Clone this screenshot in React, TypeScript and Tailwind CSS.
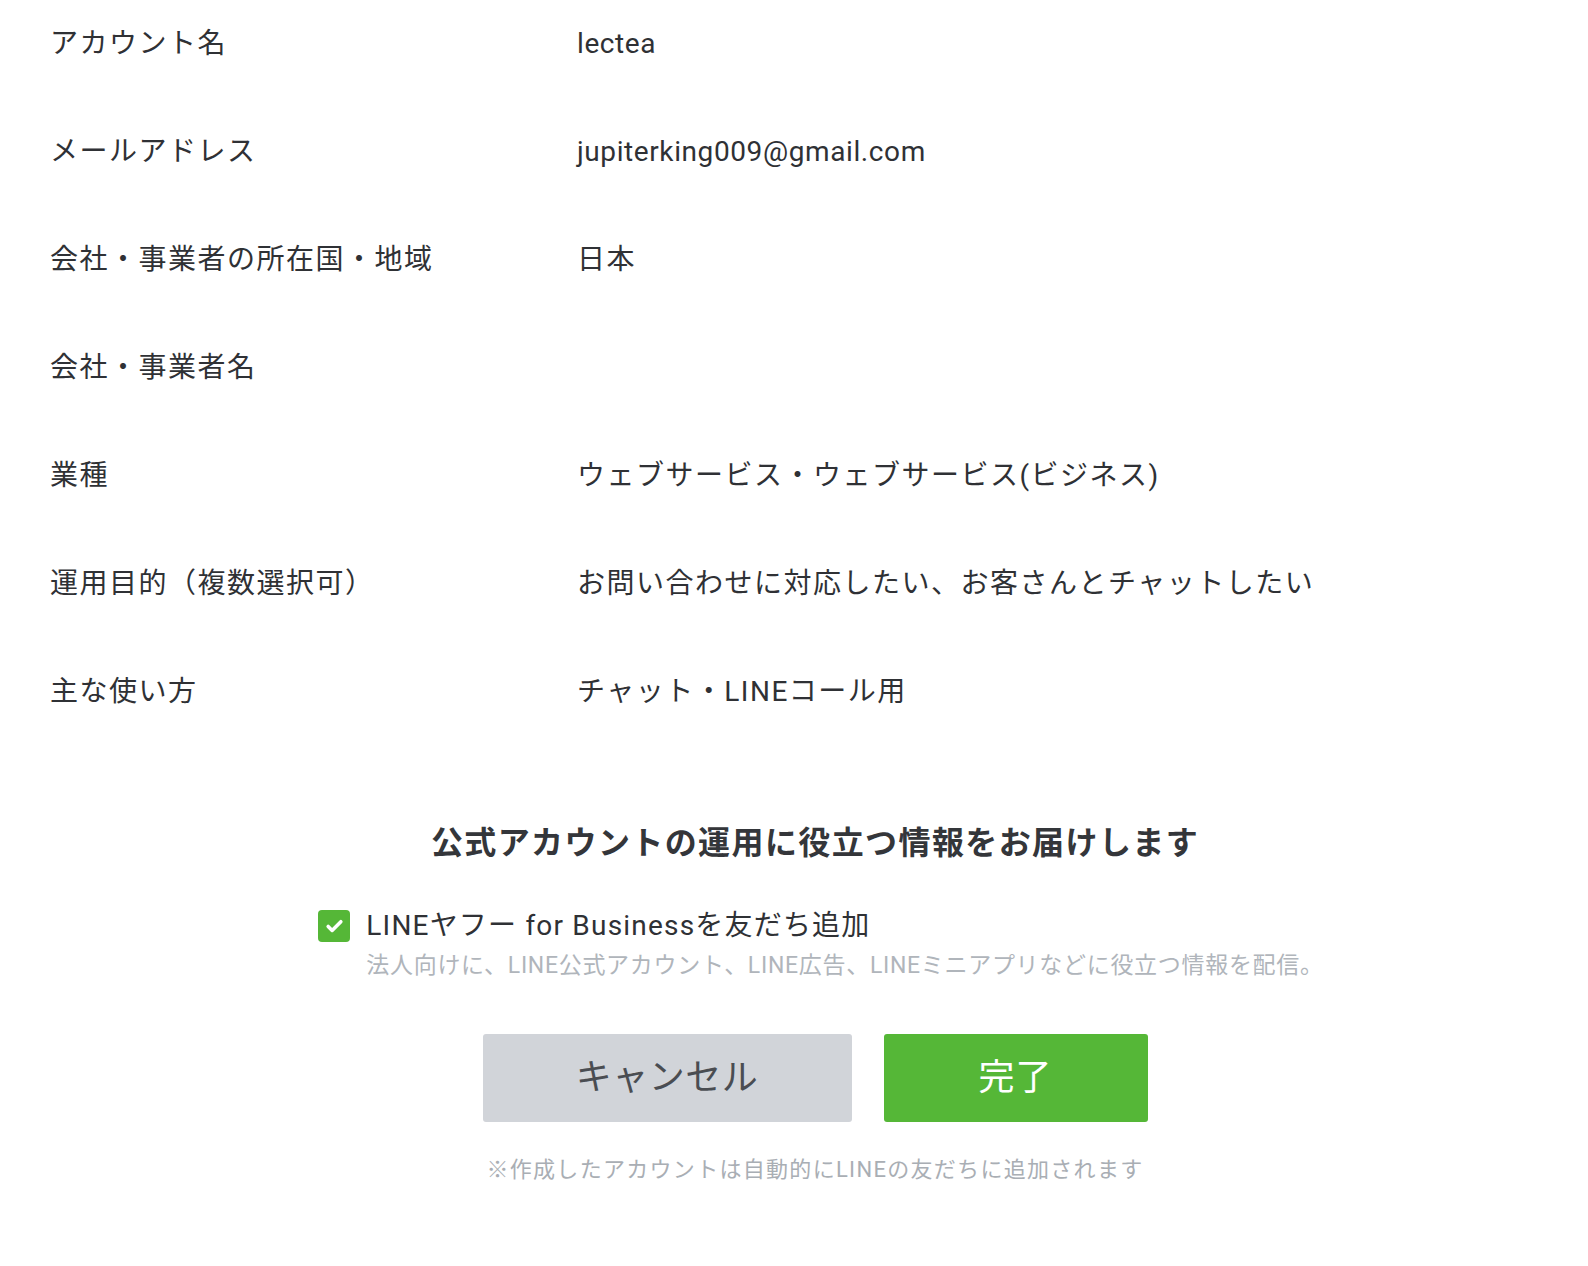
import { Check } from "lucide-react";

const rows: [string, string][] = [
  ["アカウント名", "lectea"],
  ["メールアドレス", "jupiterking009@gmail.com"],
  ["会社・事業者の所在国・地域", "日本"],
  ["会社・事業者名", ""],
  ["業種", "ウェブサービス・ウェブサービス(ビジネス)"],
  ["運用目的（複数選択可）", "お問い合わせに対応したい、お客さんとチャットしたい"],
  ["主な使い方", "チャット・LINEコール用"],
];

const App = () => {
  return (
    <div
      className="min-h-screen bg-white text-[#2f3135]"
      style={{ fontFamily: '"Roboto", "Noto Sans CJK JP", sans-serif' }}
    >
      {/* Summary rows */}
      <div className="flex flex-col gap-[72px] pl-[50px] pt-[26px]">
        {rows.map(([label, value]) => (
          <div key={label} className="flex h-[36px] items-center text-[28px] tracking-[1.5px]">
            <div className="w-[527px] shrink-0">{label}</div>
            <div className={/^[\x00-\x7f]+$/.test(value) ? "tracking-[0.6px]" : ""}>{value}</div>
          </div>
        ))}
      </div>

      <div className="flex flex-col items-center pl-[42px]">
        {/* Newsletter */}
        <h2 className="mt-[111px] text-[32px] font-bold leading-[44px] tracking-[1.4px] text-[#34363a]">
          公式アカウントの運用に役立つ情報をお届けします
        </h2>

        <div className="mt-[41px] flex gap-4 pl-[12px]">
          <div className="mt-[4px] flex h-[32px] w-[32px] items-center justify-center rounded-[4px] bg-[#55b737]">
            <Check className="h-[19px] w-[19px] text-white" strokeWidth={4.5} />
          </div>
          <div className="flex flex-col">
            <span className="text-[28px] leading-[40px] tracking-[1.2px]">
              LINEヤフー for Businessを友だち追加
            </span>
            <span className="text-[23px] leading-[40px] tracking-[0.7px] text-[#b0b5bb]">
              法人向けに、LINE公式アカウント、LINE広告、LINEミニアプリなどに役立つ情報を配信。
            </span>
          </div>
        </div>

        {/* Actions */}
        <div className="mt-[48px] flex gap-8">
          <button className="h-[88px] w-[369px] rounded-[3px] bg-[#d1d4d9] text-[36px] tracking-[0.5px] text-[#4a4d52]">
            キャンセル
          </button>
          <button className="h-[88px] w-[264px] rounded-[3px] bg-[#55b737] text-[36px] tracking-[1px] text-white">
            完了
          </button>
        </div>

        <p className="mt-[31px] text-[22px] leading-[34px] tracking-[1.3px] text-[#a9aeb4]">
          ※作成したアカウントは自動的にLINEの友だちに追加されます
        </p>
      </div>
    </div>
  );
};

export default App;
